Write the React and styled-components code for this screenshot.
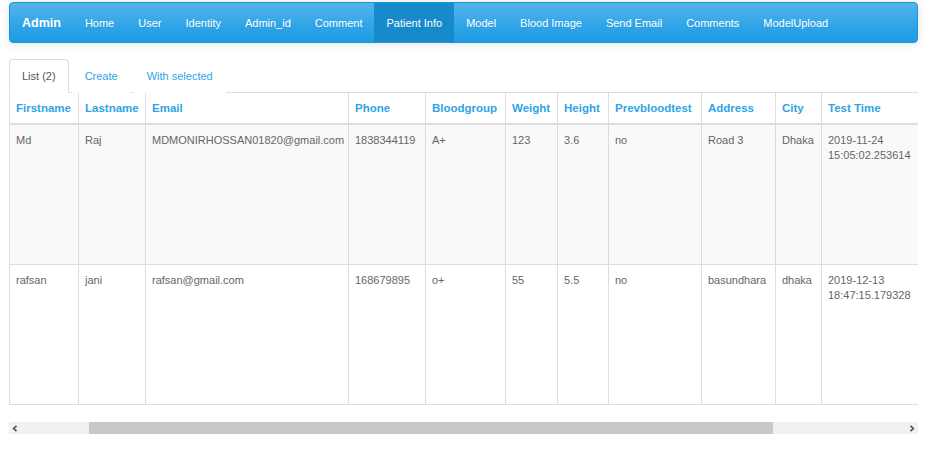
import React from 'react'
import styled, { createGlobalStyle } from 'styled-components'

const GlobalStyle = createGlobalStyle`
  body {
    margin: 0;
    background: #fff;
    font-family: "Liberation Sans", Arial, sans-serif;
    color: #555;
  }
`

const Page = styled.div`
  padding: 2px 18px 0 9px;
`

const Navbar = styled.nav`
  display: flex;
  align-items: stretch;
  height: 39px;
  border: 1px solid #1995dc;
  border-radius: 4px;
  background-image: linear-gradient(#54b4eb, #2fa4e7 60%, #1d9ce5);
  box-shadow: 0 1px 8px rgba(0, 0, 0, 0.12);
  overflow: hidden;
`

const Brand = styled.a`
  display: flex;
  align-items: center;
  padding: 0 12px;
  color: #fff;
  font-size: 12.5px;
  font-weight: bold;
  text-decoration: none;
`

const NavLink = styled.a`
  display: flex;
  align-items: center;
  padding: 0 12px;
  font-size: 11px;
  color: #fff;
  text-decoration: none;
  text-shadow: 0 1px 0 rgba(0, 0, 0, 0.05);
  background: ${p => (p.$active ? '#178acc' : 'transparent')};
`

const Tabs = styled.ul`
  display: flex;
  list-style: none;
  margin: 16px 0 0;
  padding: 0;
  border-bottom: 1px solid #ddd;
`

const Tab = styled.li`
  margin-right: 3px;
  margin-bottom: -1px;
`

const TabLink = styled.a`
  display: flex;
  align-items: center;
  height: 32px;
  padding: 0 12px;
  font-size: 11px;
  text-decoration: none;
  border: 1px solid ${p => (p.$active ? '#ddd' : 'transparent')};
  border-bottom-color: transparent;
  border-radius: 4px 4px 0 0;
  background: #fff;
  color: ${p => (p.$active ? '#555' : '#2fa4e7')};
`

const TableFrame = styled.div`
  width: 909px;
  overflow: hidden;
`

const Table = styled.table`
  border-collapse: collapse;
  table-layout: fixed;
  width: 932px;
  border-left: 1px solid #ddd;
  font-size: 11px;
`

const Th = styled.th`
  height: 30px;
  padding: 0 6px;
  text-align: left;
  font-size: 11.5px;
  font-weight: bold;
  color: #2fa4e7;
  border-left: 1px solid #ddd;
  border-right: 1px solid #ddd;
  border-bottom: 2px solid #ddd;
  white-space: nowrap;
`

const Row = styled.tr`
  background: ${p => (p.$striped ? '#f9f9f9' : '#fff')};
`

const Td = styled.td`
  height: 123px;
  padding: 8px 6px;
  vertical-align: top;
  line-height: 15px;
  color: #666;
  border: 1px solid #ddd;
  border-top: 0;
`

const Scrollbar = styled.div`
  display: flex;
  align-items: stretch;
  width: 909px;
  height: 12px;
  margin-top: 17px;
  background: #f1f1f1;
`

const ScrollButton = styled.div`
  display: flex;
  align-items: center;
  justify-content: center;
  width: 12px;
  flex: none;
`

const ScrollTrack = styled.div`
  flex: 1;
  display: flex;
`

const Thumb = styled.div`
  background: #c8c8c8;
`

const Arrow = ({ dir }) => (
  <svg width="6" height="7" viewBox="0 0 6 7">
    {dir === 'left' ? (
      <polyline points="4.5,0.8 1.6,3.5 4.5,6.2" fill="none" stroke="#505050" strokeWidth="1.6" />
    ) : (
      <polyline points="1.5,0.8 4.4,3.5 1.5,6.2" fill="none" stroke="#505050" strokeWidth="1.6" />
    )}
  </svg>
)

const navItems = ['Home', 'User', 'Identity', 'Admin_id', 'Comment', 'Patient Info', 'Model', 'Blood Image', 'Send Email', 'Comments', 'ModelUpload']

const columns = [
  ['Firstname', 69],
  ['Lastname', 67],
  ['Email', 203],
  ['Phone', 77],
  ['Bloodgroup', 80],
  ['Weight', 52],
  ['Height', 51],
  ['Prevbloodtest', 93],
  ['Address', 74],
  ['City', 46],
  ['Test Time', 120],
]

const patients = [
  ['Md', 'Raj', 'MDMONIRHOSSAN01820@gmail.com', '1838344119', 'A+', '123', '3.6', 'no', 'Road 3', 'Dhaka', '2019-11-24 15:05:02.253614'],
  ['rafsan', 'jani', 'rafsan@gmail.com', '168679895', 'o+', '55', '5.5', 'no', 'basundhara', 'dhaka', '2019-12-13 18:47:15.179328'],
]

const App = () => {
  return (
    <Page>
      <GlobalStyle />
      <Navbar>
        <Brand href="#">Admin</Brand>
        {navItems.map(item => (
          <NavLink key={item} href="#" $active={item === 'Patient Info'}>{item}</NavLink>
        ))}
      </Navbar>

      <Tabs>
        <Tab><TabLink $active href="#">List (2)</TabLink></Tab>
        <Tab><TabLink href="#">Create</TabLink></Tab>
        <Tab><TabLink href="#">With selected</TabLink></Tab>
      </Tabs>

      <TableFrame>
        <Table>
          <colgroup>
            {columns.map(([name, w]) => <col key={name} style={{ width: w }} />)}
          </colgroup>
          <thead>
            <tr>
              {columns.map(([name]) => <Th key={name}>{name}</Th>)}
            </tr>
          </thead>
          <tbody>
            {patients.map((p, i) => (
              <Row key={i} $striped={i % 2 === 0}>
                {p.map((v, j) => <Td key={j}>{v}</Td>)}
              </Row>
            ))}
          </tbody>
        </Table>
      </TableFrame>

      <Scrollbar>
        <ScrollButton><Arrow dir="left" /></ScrollButton>
        <ScrollTrack>
          <Thumb style={{ marginLeft: 68, width: 684 }} />
        </ScrollTrack>
        <ScrollButton><Arrow dir="right" /></ScrollButton>
      </Scrollbar>
    </Page>
  )
}

export default App
